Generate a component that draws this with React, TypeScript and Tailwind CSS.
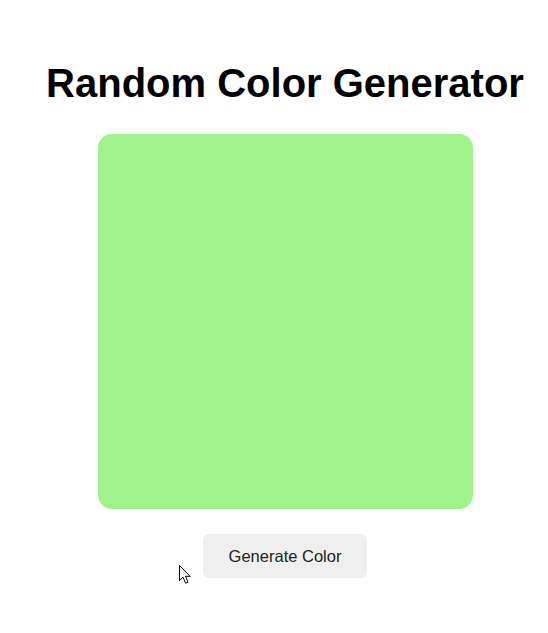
import React from "react";

export default function App() {
  return (
    <div
      className="relative w-[548px] h-[633px] bg-white overflow-hidden"
      style={{ fontFamily: '"Liberation Sans", Arial, sans-serif' }}
    >
      <div className="flex flex-col items-center pl-[22px] pt-[60px]">
        <h1 className="text-[40px] leading-[46px] font-bold text-black whitespace-nowrap">
          Random Color Generator
        </h1>
        <div className="mt-[28px] w-[375px] h-[375px] rounded-[14px] bg-[#a0f28c]" />
        <button className="mt-[25px] w-[164px] h-[44px] rounded-[6px] bg-[#efefef] text-[16.5px] text-[#222222]">
          Generate Color
        </button>
      </div>
      <svg
        className="absolute left-[178px] top-[564px]"
        width="14"
        height="21"
        viewBox="0 0 14 21"
      >
        <path
          d="M1.5 1.5 L1.5 16.5 L5 13.2 L7.6 19.2 L10 18.2 L7.5 12.3 L12.2 12.3 Z"
          fill="#ffffff"
          stroke="#000000"
          strokeWidth="1"
          strokeLinejoin="miter"
        />
      </svg>
    </div>
  );
}
